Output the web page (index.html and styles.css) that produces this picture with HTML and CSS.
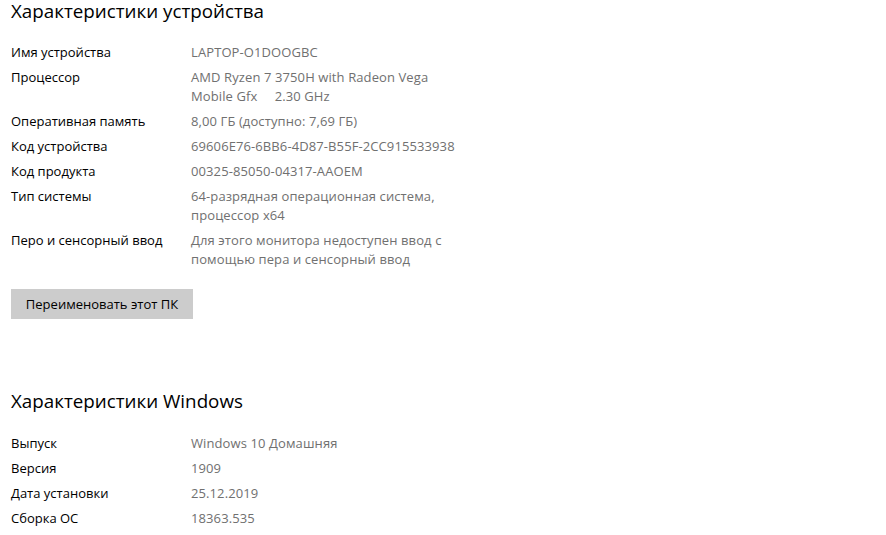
FILE: index.html
```html
<!DOCTYPE html>
<html lang="ru">
<head>
<meta charset="utf-8">
<link rel="stylesheet" href="styles.css">
</head>
<body>
<div class="page">
  <section class="section first">
    <h2 class="title">Характеристики устройства</h2>
    <div class="rows">
      <div class="label">Имя устройства</div><div class="value">LAPTOP-O1DOOGBC</div>
      <div class="label">Процессор</div><div class="value">AMD Ryzen 7 3750H with Radeon Vega<br>Mobile Gfx&nbsp;&nbsp;&nbsp;&nbsp; 2.30 GHz</div>
      <div class="label">Оперативная память</div><div class="value">8,00 ГБ (доступно: 7,69 ГБ)</div>
      <div class="label">Код устройства</div><div class="value">69606E76-6BB6-4D87-B55F-2CC915533938</div>
      <div class="label">Код продукта</div><div class="value">00325-85050-04317-AAOEM</div>
      <div class="label">Тип системы</div><div class="value">64-разрядная операционная система,<br>процессор x64</div>
      <div class="label">Перо и сенсорный ввод</div><div class="value">Для этого монитора недоступен ввод с<br>помощью пера и сенсорный ввод</div>
    </div>
    <button class="btn" type="button">Переименовать этот ПК</button>
  </section>
  <section class="section second">
    <h2 class="title">Характеристики Windows</h2>
    <div class="rows">
      <div class="label">Выпуск</div><div class="value">Windows 10 Домашняя</div>
      <div class="label">Версия</div><div class="value">1909</div>
      <div class="label">Дата установки</div><div class="value">25.12.2019</div>
      <div class="label">Сборка ОС</div><div class="value">18363.535</div>
    </div>
  </section>
</div>
</body>
</html>
```
FILE: styles.css
```css
html, body {
  margin: 0;
  padding: 0;
  background: #ffffff;
}
body {
  font-family: "Open Sans", "Noto Sans", sans-serif;
  color: #000;
  overflow: hidden;
}
.page {
  padding-left: 11px;
}
.title {
  margin: 0;
  font-weight: 400;
  font-size: 18.8px;
  line-height: 22px;
  color: #000;
}
.rows {
  display: grid;
  grid-template-columns: 180px 1fr;
  row-gap: 6px;
  margin-top: 21px;
  font-size: 13px;
  line-height: 19px;
}
.second .rows {
  margin-top: 22px;
}
.label {
  color: #000;
}
.value {
  color: #707070;
  letter-spacing: 0.1px;
}
.btn {
  display: block;
  margin-top: 20px;
  width: 182px;
  height: 30px;
  border: 0;
  padding: 0;
  background: #cccccc;
  font-family: inherit;
  font-size: 13px;
  color: #000;
}
.second {
  margin-top: 71px;
}
```
